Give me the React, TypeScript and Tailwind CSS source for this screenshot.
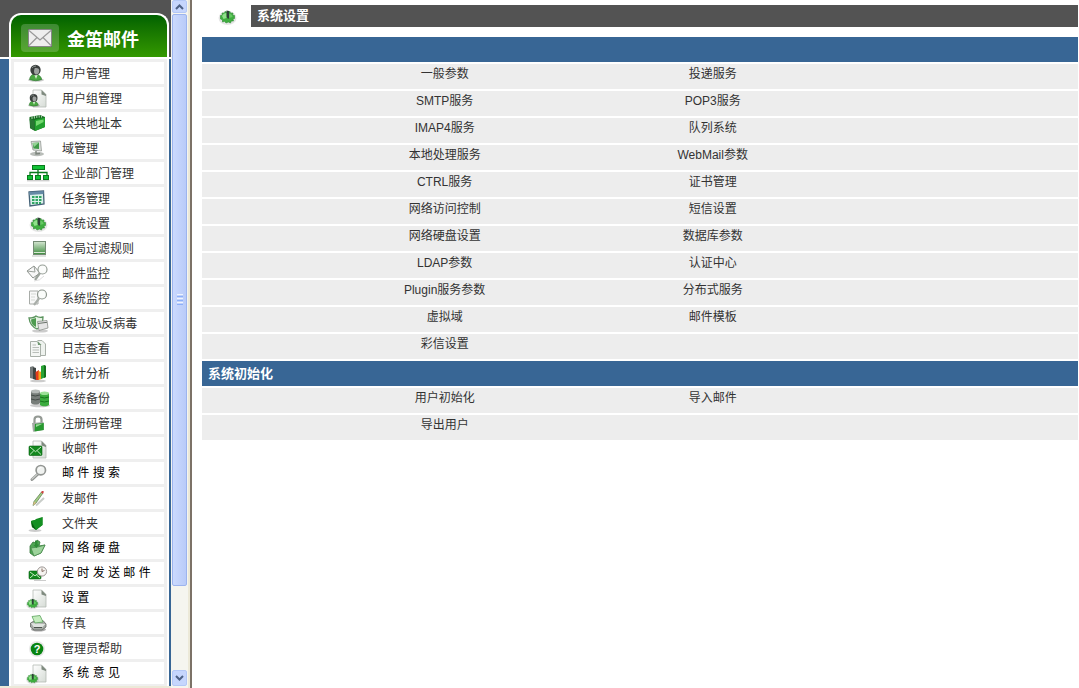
import React from "react";
import type { ReactNode } from "react";

const Page = ({ x = 7, y = 3 }: { x?: number; y?: number }) => (
  <g transform={`translate(${x} ${y})`}>
    <path d="M0 0H8.5L13 4.5V17H0Z" fill="url(#paper)" stroke="#b4bab4" strokeWidth=".8" />
    <path d="M8.5 0L13 4.5V6L8.5 4.5Z" fill="#7f8a7f" />
  </g>
);

const Gear = ({ x, y, s = 1 }: { x: number; y: number; s?: number }) => (
  <g transform={`translate(${x} ${y}) scale(${s})`}>
    <ellipse cx="0" cy="1" rx="9" ry="7" fill="#000" opacity=".1" />
    <path
      d="M-7 -1.5L-5 -2L-5.5 -4L-3 -3.8L-2.5 -5.5L0 -4.5L2.5 -5.5L3 -3.8L5.5 -4L5 -2L7 -1.5V1.5L5.4 2L6 4L3.8 4L3 6L.8 5L-1.5 6L-2.8 4.3L-5 5L-5 2.8L-7 2Z"
      fill="#3fae3f"
      stroke="#2c8c31"
      strokeWidth=".6"
    />
    <path d="M-5.5 -1Q-4 -4 -1 -4V1L-4 2Z" fill="#8fe08a" />
    <path d="M1.5 -3.5Q5 -3 5 0L1.5 1Z" fill="#65c963" />
    <path d="M-1 -6.5L1.6 -6V1L.6 2L-.8 0Z" fill="#2d4037" />
  </g>
);

const User = ({ x = 0, y = 0, s = 1 }: { x?: number; y?: number; s?: number }) => (
  <g transform={`translate(${x} ${y}) scale(${s})`}>
    <ellipse cx="10" cy="18" rx="8" ry="1.8" fill="#000" opacity=".2" />
    <path d="M3.5 17.5C4 14 6 12 9 12S15 14 15.8 17.5Q10 20 3.5 17.5Z" fill="#4aa742" stroke="#26702a" strokeWidth=".6" />
    <path d="M8 12L10 17L12 12Z" fill="#d8f2d0" />
    <circle cx="9.5" cy="8" r="5.2" fill="#3a3f3d" />
    <path d="M8.5 6.5C10 5.5 13.2 6 13.2 8.5C13.2 11 12 12.5 10.3 12.5C8.8 12.5 8 11 8 9Z" fill="#9da19f" />
    <path d="M6 6Q7.5 4 10 4" stroke="#8e9592" fill="none" />
  </g>
);

const Lens = () => (
  <>
    <path d="M12 12L6 17.5" stroke="#8f928f" strokeWidth="3" strokeLinecap="round" />
    <path d="M11.5 12L6 17" stroke="#c9ccc9" strokeWidth="1.2" strokeLinecap="round" />
    <circle cx="14.8" cy="8.2" r="4.7" fill="#f0f2f0" stroke="#939693" strokeWidth="1.7" />
    <path d="M12.3 7.6Q13.2 5.4 15.5 5.4" fill="none" stroke="#fff" />
  </>
);

const Mail = ({ x, y, w = 13, h = 9 }: { x: number; y: number; w?: number; h?: number }) => (
  <g transform={`translate(${x} ${y})`}>
    <rect width={w} height={h} rx="1" fill="#12881d" stroke="#086011" strokeWidth=".6" />
    <path
      d={`M1 1L${w / 2} ${h * 0.6}L${w - 1} 1M1 ${h - 1}L${w * 0.37} ${h * 0.5}M${w - 1} ${h - 1}L${w * 0.63} ${h * 0.5}`}
      fill="none"
      stroke="#d9f4d6"
      strokeWidth=".9"
    />
  </g>
);

const art: Record<string, ReactNode> = {
  user: <User />,
  group: (
    <>
      <Page />
      <User x={0.5} y={5} s={0.75} />
    </>
  ),
  book: (
    <>
      <path d="M3.5 5L14 3L19 5V15L9 19L4 16Z" fill="#146e20" />
      <path d="M8.5 8L19 5.5V15L9 19Z" fill="#23a12f" />
      <path d="M10 9L17.5 7.4V10L10 14Z" fill="#74da6f" />
      <path d="M3.5 6.5L8.5 8.5V18.5L4.5 16.5Z" fill="#2a7734" />
      <path d="M6 4.6V7M8.4 4.1V6.5M10.8 3.6V6M13.2 3.2V5.6M15.6 3.8V5.6" stroke="#c8ddc9" strokeWidth=".9" />
    </>
  ),
  monitor: (
    <>
      <ellipse cx="11" cy="17" rx="7" ry="2.2" fill="#b9bdb9" />
      <path d="M5 4.5L14.5 4L15.5 14L7 13Z" fill="#d9ddd9" stroke="#8b918b" strokeWidth=".7" />
      <path d="M6.6 6L13 5.5V12L7.5 11.5Z" fill="#3f9a47" />
      <path d="M6.6 6L13 5.5L8 10Z" fill="#94d294" />
      <path d="M10 14V17L14 16.5" stroke="#7c847c" strokeWidth="1.4" fill="none" />
    </>
  ),
  org: (
    <>
      <path d="M12 8V14M4 14V10.5H21V14" fill="none" stroke="#087a1b" strokeWidth="1.3" />
      <g fill="#12c136" stroke="#087a1b">
        <rect x="6.5" y="3.5" width="12" height="4" />
        <rect x="1.5" y="13.5" width="5" height="4" />
        <rect x="9.5" y="13.5" width="5" height="4" />
        <rect x="17.5" y="13.5" width="5" height="4" />
      </g>
      <path d="M1 18.8H23.5" stroke="#bbb" />
    </>
  ),
  calendar: (
    <>
      <path d="M3 5L17.5 4L18 17L4 19Z" fill="#d9f1e9" stroke="#446277" strokeWidth="1.3" />
      <path d="M3.2 5L17.5 4V7L3.4 8Z" fill="#658aa6" />
      <path d="M6 10H16M6 13H16M6 16H15" stroke="#30a563" strokeWidth="2" strokeDasharray="2.5 1" />
    </>
  ),
  gear: <Gear x={12.5} y={12} />,
  filter: (
    <>
      <rect x="7.5" y="4.5" width="12" height="13" fill="url(#leaf)" stroke="#748b74" />
      <path d="M8 15.5H19" stroke="#d7e8d3" />
      <path d="M6 19H20" stroke="#bfc5bf" />
    </>
  ),
  mailwatch: (
    <>
      <path d="M1 9L8 4L14 11L7 16Z" fill="#f7f7f7" stroke="#8d928d" />
      <path d="M1 9L9 10L8 4" fill="none" stroke="#9ba19b" />
      <path d="M14 11L9 18" stroke="#9ca39c" strokeWidth="2.2" />
      <circle cx="16.5" cy="7.5" r="4.5" fill="#fafcfa" fillOpacity=".85" stroke="#969e96" strokeWidth="1.2" />
      <path d="M8 19Q14 19 18 14" stroke="#ddd" fill="none" />
    </>
  ),
  syswatch: (
    <>
      <path d="M3.5 4H12V17H3.5Z" fill="#f8f8f8" stroke="#a8aca8" />
      <path d="M5 7H10M5 10H9M5 13H9" stroke="#d3d8d3" />
      <path d="M13 11.5L8 18" stroke="#a9aea9" strokeWidth="2.2" />
      <circle cx="16" cy="7.5" r="4.5" fill="#fafcfa" stroke="#8d968d" strokeWidth="1.2" />
    </>
  ),
  shield: (
    <>
      <ellipse cx="14" cy="19" rx="8" ry="1.6" fill="#ccc" />
      <path d="M3 6Q8 6 10 4Q13 6 17 5Q17 14 11 17Q4 14 3 6Z" fill="#e7f2e4" stroke="#59935c" strokeWidth="1.3" />
      <path d="M5 7.5L10 6V15Q5 13 5 7.5Z" fill="#4e9c50" />
      <path d="M11.5 9.5L21 8.5L22 16L13 18.5Z" fill="#e5e5e5" stroke="#8c908c" strokeWidth=".8" />
      <path d="M12 11.5L21 10.3" stroke="#6b736b" />
    </>
  ),
  log: (
    <>
      <path d="M11.5 3.5H16L19.5 7V18.5H13" fill="#eef2ee" stroke="#a9b0a9" />
      <path d="M4.5 4.5H11L14.5 8V19.5H4.5Z" fill="#f4f6f4" stroke="#a9b0a9" />
      <path d="M11.5 4L15.5 8H12Z" fill="#6f9972" />
      <path d="M6.5 8H10M6.5 10.5H13M6.5 13H13M6.5 15.5H13" stroke="#b9beb9" />
    </>
  ),
  chart: (
    <>
      <ellipse cx="12" cy="19" rx="8" ry="1.3" fill="#ccc" />
      <path d="M4 5L7.5 4V17L4 16Z" fill="#747a7a" />
      <path d="M7 5L10 6V18L7 17Z" fill="#3d4443" />
      <path d="M9.5 10L13 8V18L10 18Z" fill="#e23b1c" />
      <path d="M12.5 9L15.5 10V17L12.5 18Z" fill="#f3a41c" />
      <path d="M15 4L18 3L20 4V15L15 17Z" fill="#29a335" />
      <path d="M18 3L20 4V15L18 16Z" fill="#14701d" />
    </>
  ),
  backup: (
    <>
      <ellipse cx="14" cy="18.5" rx="10" ry="1.8" fill="#ccc" />
      <path d="M5 4V16C7 18 12 18 14 16V4Z" fill="#777d79" />
      <ellipse cx="9.5" cy="4.4" rx="4.5" ry="1.8" fill="#b5bab7" />
      <path d="M5 8Q9 10 14 8M5 12Q9 14 14 12" stroke="#444c47" fill="none" />
      <path d="M14 6V18C16 19.7 21 19.7 23 18V6Z" fill="#3bab3e" />
      <ellipse cx="18.5" cy="6.2" rx="4.5" ry="1.8" fill="#9de098" />
      <path d="M14 10Q18 12 23 10M14 14Q18 16 23 14" stroke="#17751d" fill="none" />
    </>
  ),
  lock: (
    <>
      <path d="M8.5 11V7.5C8.5 3.5 15.5 3.5 15.5 7.5V11" fill="none" stroke="#949a94" strokeWidth="2.2" />
      <path d="M6 11L17.5 10V18L7 19.8Z" fill="#a6aaa6" />
      <path d="M9 12L17.8 11V18L8.5 19.5Z" fill="#27992f" />
      <path d="M10 12.5L16.5 11.8L10 15Z" fill="#9bd899" />
    </>
  ),
  receive: (
    <>
      <Page y={4} />
      <Mail x={3} y={9} w={13} h={9.5} />
    </>
  ),
  search: <Lens />,
  pencil: (
    <>
      <path d="M10 18.5L18 11" stroke="#c9cdc9" strokeWidth="2" />
      <path d="M7 18.5L8 14.5L15.5 5L17 6L10 16Z" fill="#a3cf85" stroke="#57754b" strokeWidth=".7" />
      <path d="M15 5.5L16 4Q18 3.5 17.8 5L17 6.8Z" fill="#d24242" />
      <path d="M7 18.5L8 14.5L10 16Z" fill="#d9bd83" />
    </>
  ),
  folder: (
    <>
      <ellipse cx="9" cy="18.5" rx="6.5" ry="1.5" fill="#ccc" />
      <path d="M5 9L9 8L10 7L16.5 5V13L10 18L6 15Z" fill="#11861d" />
      <path d="M5 9L15 6.5L16.5 5V13L10 18Z" fill="#149022" />
      <path d="M5 9L10 17.8L6 15Z" fill="#075e10" />
    </>
  ),
  disk: (
    <>
      <path d="M4 9L7 5L10 6L11 3L14 5L13 9L19 8L15 16L8 19L4 16Z" fill="#4fa653" stroke="#39773d" strokeWidth=".8" />
      <path d="M5 11L12 10L19 8L15 16L8 19Z" fill="#9dd39b" stroke="#45884a" strokeWidth=".7" />
      <path d="M9 3.5V8L7.5 8L10.5 11L13 7.5H11.5V4Z" fill="#2f8c37" />
    </>
  ),
  timer: (
    <>
      <Mail x={3} y={9} w={12} h={8} />
      <circle cx="16" cy="9.5" r="4.6" fill="#f5f3f0" stroke="#9c9693" />
      <path d="M16 6.5V9.5L18.5 8.5" fill="none" stroke="#876c63" />
      <path d="M8 18.5H20" stroke="#ccc" />
    </>
  ),
  pagegear: (
    <>
      <Page y={3} />
      <Gear x={6.5} y={16.5} s={0.72} />
    </>
  ),
  fax: (
    <>
      <ellipse cx="12.5" cy="17.5" rx="7.5" ry="2" fill="#aaa" />
      <path d="M4.5 11L9 8.5H17L20 12V15L16 18H8L4.5 15Z" fill="#a4a9a4" stroke="#626862" strokeWidth=".8" />
      <path d="M5 11L19.5 12L16 15.5H8Z" fill="#dfe3df" />
      <path d="M6 4.5L14 3.5L17 10L9 11Z" fill="#c4ecbd" stroke="#5da45e" strokeWidth=".8" />
      <path d="M8 15.5H16" stroke="#4c544e" />
    </>
  ),
  help: (
    <>
      <circle cx="11" cy="12" r="8" fill="#000" opacity=".09" />
      <circle cx="11" cy="12" r="6.3" fill="#078411" />
      <text x="11" y="16" textAnchor="middle" fontSize="11" fontWeight="bold" fill="#fff">?</text>
    </>
  ),
};

const Icon = ({ name }: { name: string }) => (
  <svg viewBox="0 0 24 22" className="h-[22px] w-6 shrink-0" aria-hidden="true">
    {art[name]}
  </svg>
);

const menu: [string, string][] = [
  ["user", "用户管理"],
  ["group", "用户组管理"],
  ["book", "公共地址本"],
  ["monitor", "域管理"],
  ["org", "企业部门管理"],
  ["calendar", "任务管理"],
  ["gear", "系统设置"],
  ["filter", "全局过滤规则"],
  ["mailwatch", "邮件监控"],
  ["syswatch", "系统监控"],
  ["shield", "反垃圾\\反病毒"],
  ["log", "日志查看"],
  ["chart", "统计分析"],
  ["backup", "系统备份"],
  ["lock", "注册码管理"],
  ["receive", "收邮件"],
  ["search", "邮 件 搜 索"],
  ["pencil", "发邮件"],
  ["folder", "文件夹"],
  ["disk", "网 络 硬 盘"],
  ["timer", "定 时 发 送 邮 件"],
  ["pagegear", "设 置"],
  ["fax", "传真"],
  ["help", "管理员帮助"],
  ["pagegear", "系 统 意 见"],
];

const settings: [string, string][] = [
  ["一般参数", "投递服务"],
  ["SMTP服务", "POP3服务"],
  ["IMAP4服务", "队列系统"],
  ["本地处理服务", "WebMail参数"],
  ["CTRL服务", "证书管理"],
  ["网络访问控制", "短信设置"],
  ["网络硬盘设置", "数据库参数"],
  ["LDAP参数", "认证中心"],
  ["Plugin服务参数", "分布式服务"],
  ["虚拟域", "邮件模板"],
  ["彩信设置", ""],
];

const initial: [string, string][] = [
  ["用户初始化", "导入邮件"],
  ["导出用户", ""],
];

const Rows = ({ rows }: { rows: [string, string][] }) => (
  <>
    {rows.map(([left, right]) => (
      <tr key={left} className="h-[25px] bg-[#ededed] text-center align-top leading-5">
        <td />
        <td><a href="#">{left}</a></td>
        <td>{right && <a href="#">{right}</a>}</td>
        <td />
      </tr>
    ))}
  </>
);

const SectionHead = ({ title }: { title: string }) => (
  <tr className="h-[25px] bg-[#386695] text-left text-[13px] leading-5 text-white">
    <th colSpan={4} className="px-1.5 font-bold">{title}</th>
  </tr>
);

const ScrollButton = ({ label, d, className }: { label: string; d: string; className: string }) => (
  <button aria-label={label} className={`flex w-[15px] shrink-0 items-center justify-center rounded-xs border border-[#b4c8f6] bg-[#c6d6fd] ${className}`}>
    <svg viewBox="0 0 9 6" className="h-1.5 w-[9px]" aria-hidden="true">
      <path d={d} fill="none" stroke="#4d6185" strokeWidth="2" />
    </svg>
  </button>
);

export default function App() {
  return (
    <div className="flex min-h-screen bg-white font-['Liberation_Sans','Noto_Sans_CJK_SC',sans-serif] text-xs text-[#333]">
      <svg className="absolute size-0" aria-hidden="true">
        <defs>
          <linearGradient id="paper" x2="1" y2="1">
            <stop stopColor="#fff" />
            <stop offset="1" stopColor="#d6dcd6" />
          </linearGradient>
          <linearGradient id="leaf" x2="0" y2="1">
            <stop stopColor="#d5e6d2" />
            <stop offset="1" stopColor="#3c8c3d" />
          </linearGradient>
        </defs>
      </svg>

      <aside className="flex w-[171px] shrink-0 flex-col bg-[#386695]">
        <header className="border-b-2 border-white bg-[#535353] pt-[13px] pr-0.5 pl-[9px]">
          <div className="flex h-11 items-center gap-2 rounded-t-xl border-2 border-b-0 border-white bg-linear-to-b from-[#006200] to-[#339900] pt-1 pl-2.5 text-white">
            <span className="flex h-7 w-[38px] items-center justify-center rounded bg-white/20">
              <svg viewBox="0 0 24 18" className="h-[18px] w-6" aria-hidden="true">
                <path d="M0 0H24V18H0Z" fill="#eee" stroke="#666" strokeWidth="1.5" />
                <path d="M1 1.5L12 11L23 1.5M1 16.5L9 8.5M23 16.5L15 8.5" fill="none" stroke="#999" strokeWidth="1.2" />
              </svg>
            </span>
            <h1 className="pt-1 text-lg leading-6 font-bold">金笛邮件</h1>
          </div>
        </header>
        <nav className="mr-0.5 ml-[9px] flex grow flex-col gap-[3px] border-x-2 border-white bg-[#efefef] px-[3px] pt-[3px] pb-0.5">
          {menu.map(([icon, label]) => {
            const spaced = label.includes(" ");
            return (
              <a key={label} href="#" className="flex h-[22px] items-center gap-3 bg-white pl-3 whitespace-nowrap">
                <Icon name={icon} />
                <span className={spaced ? "text-black" : "pt-0.5"}>{label}</span>
              </a>
            );
          })}
        </nav>
        <div className="h-0.5 bg-[#ece9d8]" />
      </aside>

      <div className="flex w-[17px] shrink-0 flex-col items-center bg-[#f5f5ef] pb-0.5">
        <ScrollButton label="向上滚动" d="M1 5L4.5 1.5L8 5" className="h-[13px]" />
        <div className="mt-px flex w-[15px] grow-[563] flex-col items-center justify-center gap-px rounded-xs border border-[#9cb4ee] bg-linear-to-r from-[#cbdafe] to-[#b9cbf8]">
          <span className="h-px w-1.5 bg-[#eef4fe]" />
          <span className="h-px w-1.5 bg-[#8cb0f8]" />
          <span className="h-px w-1.5 bg-[#eef4fe]" />
          <span className="h-px w-1.5 bg-[#8cb0f8]" />
          <span className="h-px w-1.5 bg-[#eef4fe]" />
          <span className="h-px w-1.5 bg-[#8cb0f8]" />
        </div>
        <div className="grow-[85]" />
        <ScrollButton label="向下滚动" d="M1 1L4.5 4.5L8 1" className="h-4" />
      </div>
      <div className="w-1 shrink-0 border-r-2 border-[#7c7267] bg-[#ece9d8]" />

      <main className="min-w-0 grow pt-[5px] pr-px pl-2.5">
        <div className="flex items-center">
          <div className="flex w-[49px] shrink-0 justify-center">
            <Icon name="gear" />
          </div>
          <h2 className="grow bg-[#535353] px-1.5 py-px text-[13px] leading-5 font-bold text-white">系统设置</h2>
        </div>
        <table className="mt-2 w-full table-fixed border-separate border-spacing-x-0 border-spacing-y-0.5 [&_td]:p-0 [&_th]:py-0">
          <colgroup>
            <col className="w-[12.4%]" />
            <col className="w-[30.6%]" />
            <col className="w-[30.6%]" />
            <col />
          </colgroup>
          <tbody>
            <SectionHead title="" />
            <Rows rows={settings} />
            <SectionHead title="系统初始化" />
            <Rows rows={initial} />
          </tbody>
        </table>
      </main>
    </div>
  );
}
